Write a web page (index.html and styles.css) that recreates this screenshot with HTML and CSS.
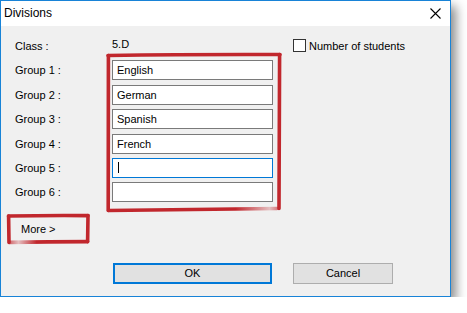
FILE: index.html
```html
<!DOCTYPE html>
<html lang="en">
<head>
    <meta charset="UTF-8">
    <title>Divisions</title>
    <link rel="stylesheet" href="styles.css">
</head>
<body>
    <div class="dialog">
        <div class="titlebar">
            <span class="title">Divisions</span>
            <svg class="close" width="11" height="11" viewBox="0 0 11 11">
                <path d="M0.5 0.5 L10.5 10.5 M10.5 0.5 L0.5 10.5" stroke="#000" stroke-width="1.1" fill="none"/>
            </svg>
        </div>
        <div class="content">
            <div class="form">
                <span class="label">Class :</span>
                <span class="value">5.D</span>
                <label class="check"><span class="box"></span>Number of students</label>

                <span class="label">Group 1 :</span>
                <div class="field">English</div>
                <span class="label">Group 2 :</span>
                <div class="field">German</div>
                <span class="label">Group 3 :</span>
                <div class="field">Spanish</div>
                <span class="label">Group 4 :</span>
                <div class="field">French</div>
                <span class="label">Group 5 :</span>
                <div class="field focus"><span class="caret"></span></div>
                <span class="label">Group 6 :</span>
                <div class="field"></div>
            </div>
            <div class="more">More &gt;</div>
            <div class="actions">
                <div class="btn default">OK</div>
                <div class="btn">Cancel</div>
            </div>
        </div>

        <!-- red hand drawn marks -->
        <svg class="marks" width="452" height="298" viewBox="0 0 452 298">
            <defs>
                <linearGradient id="fadeR" x1="108" y1="0" x2="278" y2="0" gradientUnits="userSpaceOnUse">
                    <stop offset="0" stop-color="#c1272d"/>
                    <stop offset="0.75" stop-color="#c1272d"/>
                    <stop offset="0.95" stop-color="#c1272d" stop-opacity="0.25"/>
                    <stop offset="1" stop-color="#c1272d" stop-opacity="0.6"/>
                </linearGradient>
                <linearGradient id="fadeL" x1="9" y1="0" x2="88" y2="0" gradientUnits="userSpaceOnUse">
                    <stop offset="0" stop-color="#c1272d" stop-opacity="0.7"/>
                    <stop offset="0.12" stop-color="#c1272d" stop-opacity="0.25"/>
                    <stop offset="0.35" stop-color="#c1272d"/>
                    <stop offset="1" stop-color="#c1272d"/>
                </linearGradient>
            </defs>
            <g fill="none" stroke="#c1272d" stroke-width="3.6" stroke-linecap="round">
                <path d="M108 55.5 Q190 54.2 280 54.5"/>
                <path d="M279.6 54.5 L279 208.5"/>
                <path d="M108.4 55.5 L108.2 210.5"/>
                <path d="M108.5 210.5 Q190 209.6 277 208.5" stroke="url(#fadeR)"/>
                <path d="M8.5 216 Q48 215.3 88 215.6"/>
                <path d="M8.6 216 L9 242.5"/>
                <path d="M88 215.6 L87.6 241.6"/>
                <path d="M9.5 242.4 Q48 241.6 87.6 241.6" stroke="url(#fadeL)"/>
            </g>
        </svg>
    </div>
</body>
</html>
```

FILE: styles.css
```css
* {
    margin: 0;
    padding: 0;
    box-sizing: border-box;
}
body {
    background: #fff;
    font-family: "Liberation Sans", Arial, sans-serif;
    font-size: 11px;
    color: #000;
}
/*窗口*/
.dialog {
    position: relative;
    width: 451px;
    height: 297px;
    border: 1px solid #1883d7;
    background: #f0f0f0;
    box-shadow: 5px 6px 10px rgba(0, 0, 0, 0.45);
}
.titlebar {
    height: 25px;
    background: #fff;
    display: flex;
    align-items: center;
    justify-content: space-between;
    padding: 0 9px 0 3px;
}
.title {
    font-size: 12px;
    margin-top: -1px;
}
.close {
    display: block;
    margin-top: -1px;
}
.content {
    padding: 10px 0 0 14px;
}
/*表单*/
.form {
    display: grid;
    grid-template-columns: 97px 161px auto;
    grid-auto-rows: 20px;
    row-gap: 4.4px;
    align-items: center;
}
.label {
    grid-column: 1;
}
.value {
    margin-top: -5px;
}
.check {
    display: flex;
    align-items: center;
    margin-left: 20px;
    margin-top: -1px;
}
.check .box {
    width: 13px;
    height: 13px;
    border: 1px solid #333;
    background: #fff;
    margin-right: 3px;
}
.field {
    grid-column: 2;
    height: 20px;
    border: 1px solid #7a7a7a;
    background: #fff;
    padding-left: 4px;
    line-height: 18px;
}
.field.focus {
    border-color: #0078d7;
}
.caret {
    display: inline-block;
    width: 1px;
    height: 11px;
    background: #000;
    margin-left: 1px;
    vertical-align: -1px;
}
/*按钮*/
.more {
    width: 74px;
    height: 23px;
    line-height: 23px;
    margin: 16px 0 0 1px;
    padding-left: 5px;
}
.actions {
    display: flex;
    gap: 21px;
    margin: 22px 0 0 98px;
}
.btn {
    width: 100px;
    height: 21px;
    border: 1px solid #adadad;
    background: #e1e1e1;
    text-align: center;
    line-height: 19px;
}
.btn.default {
    width: 159px;
    border: 2px solid #0078d7;
    line-height: 17px;
}
.marks {
    position: absolute;
    left: -1px;
    top: -1px;
    pointer-events: none;
}
```
